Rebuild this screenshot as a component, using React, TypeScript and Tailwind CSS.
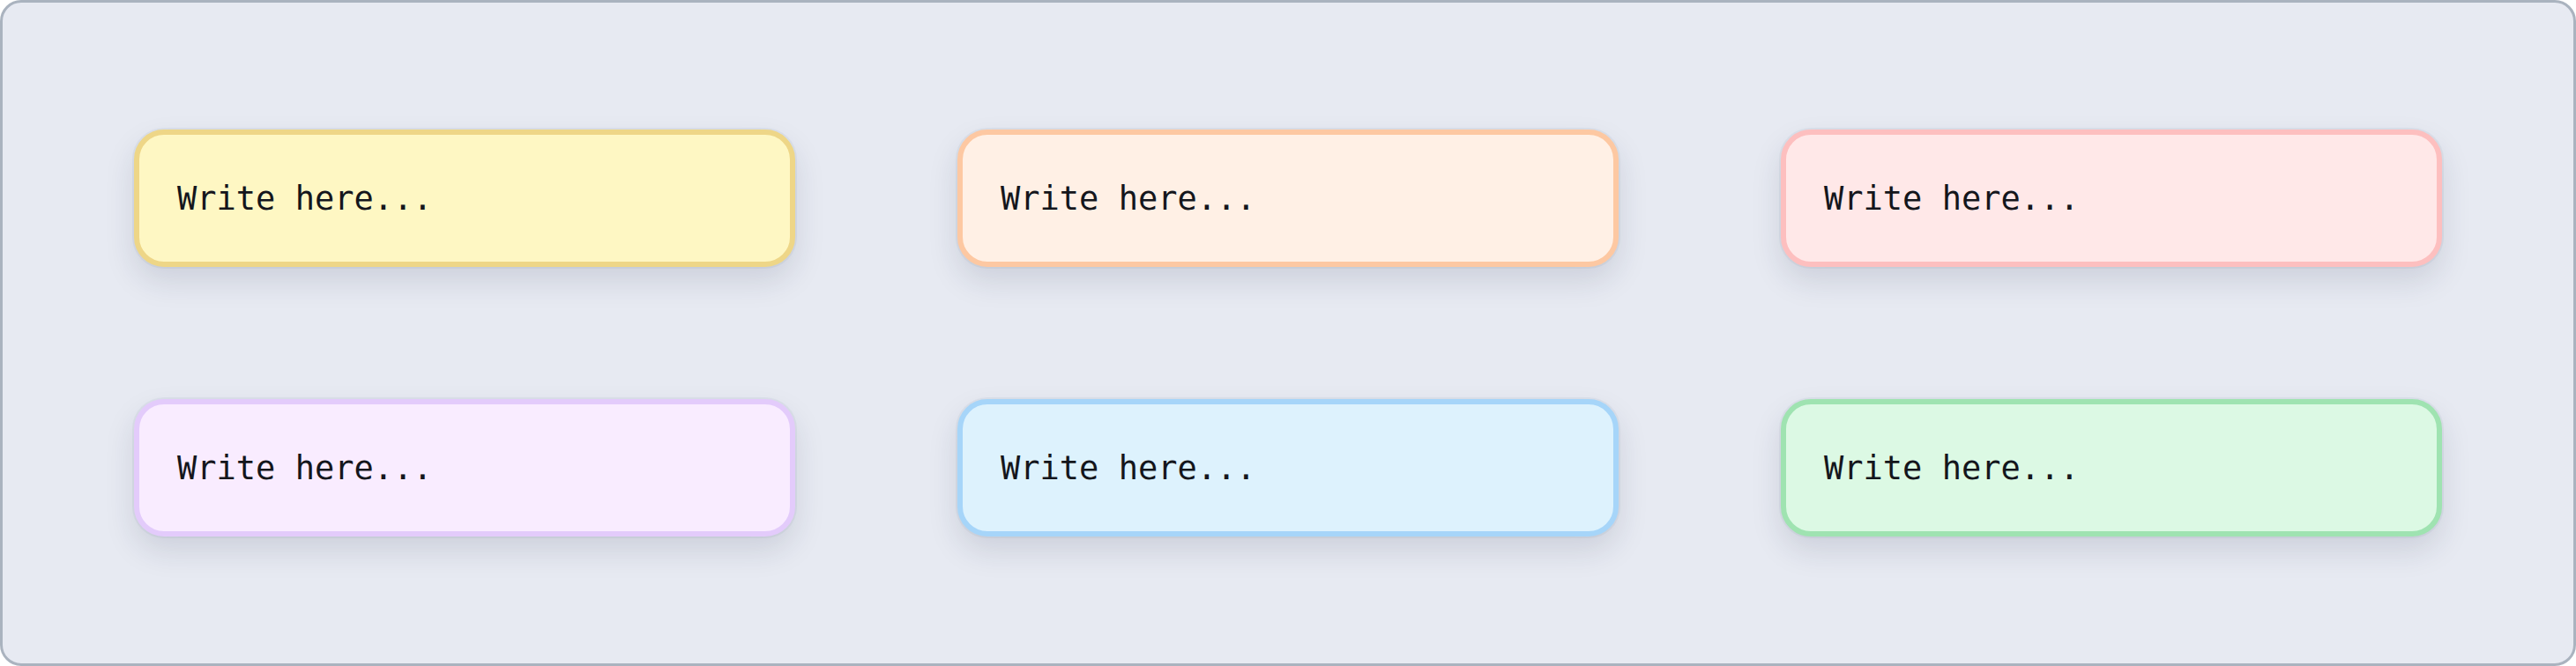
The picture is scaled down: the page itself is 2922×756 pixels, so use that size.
import { FC, ReactNode } from 'react';

const notes = [
  { bg: 'bg-[#fef7c3]', border: 'border-[#eed687]' },
  { bg: 'bg-[#fff0e5]', border: 'border-[#fdc8a2]' },
  { bg: 'bg-[#ffe8e8]', border: 'border-[#fdbfbf]' },
  { bg: 'bg-[#f9ecff]', border: 'border-[#e3cbfb]' },
  { bg: 'bg-[#ddf2fd]', border: 'border-[#a6d5f9]' },
  { bg: 'bg-[#dcf9e4]', border: 'border-[#9fe3b1]' },
];

const Note: FC<{ bg: string; border: string }> = ({ bg, border }): ReactNode => {
  return (
    <div
      className={`${bg} ${border} flex h-[156px] w-[750px] items-center rounded-[34px] border-[6px] px-[43px] shadow-[0_16px_34px_rgba(30,41,70,0.13),0_0_0_2px_rgba(200,208,222,0.35)]`}
    >
      <span className="font-['DejaVu_Sans_Mono','Liberation_Mono',monospace] text-[37px] leading-none text-[#14161c]">
        Write here...
      </span>
    </div>
  );
};

const App: FC = (): ReactNode => {
  return (
    <div className="flex h-[756px] w-[2922px] items-center justify-center rounded-[24px] border-[3px] border-[#aab3bf] bg-[#e7eaf2]">
      <div className="grid grid-cols-[repeat(3,750px)] gap-x-[184px] gap-y-[150px]">
        {notes.map((n, i) => (
          <Note key={i} bg={n.bg} border={n.border} />
        ))}
      </div>
    </div>
  );
};

export default App;
